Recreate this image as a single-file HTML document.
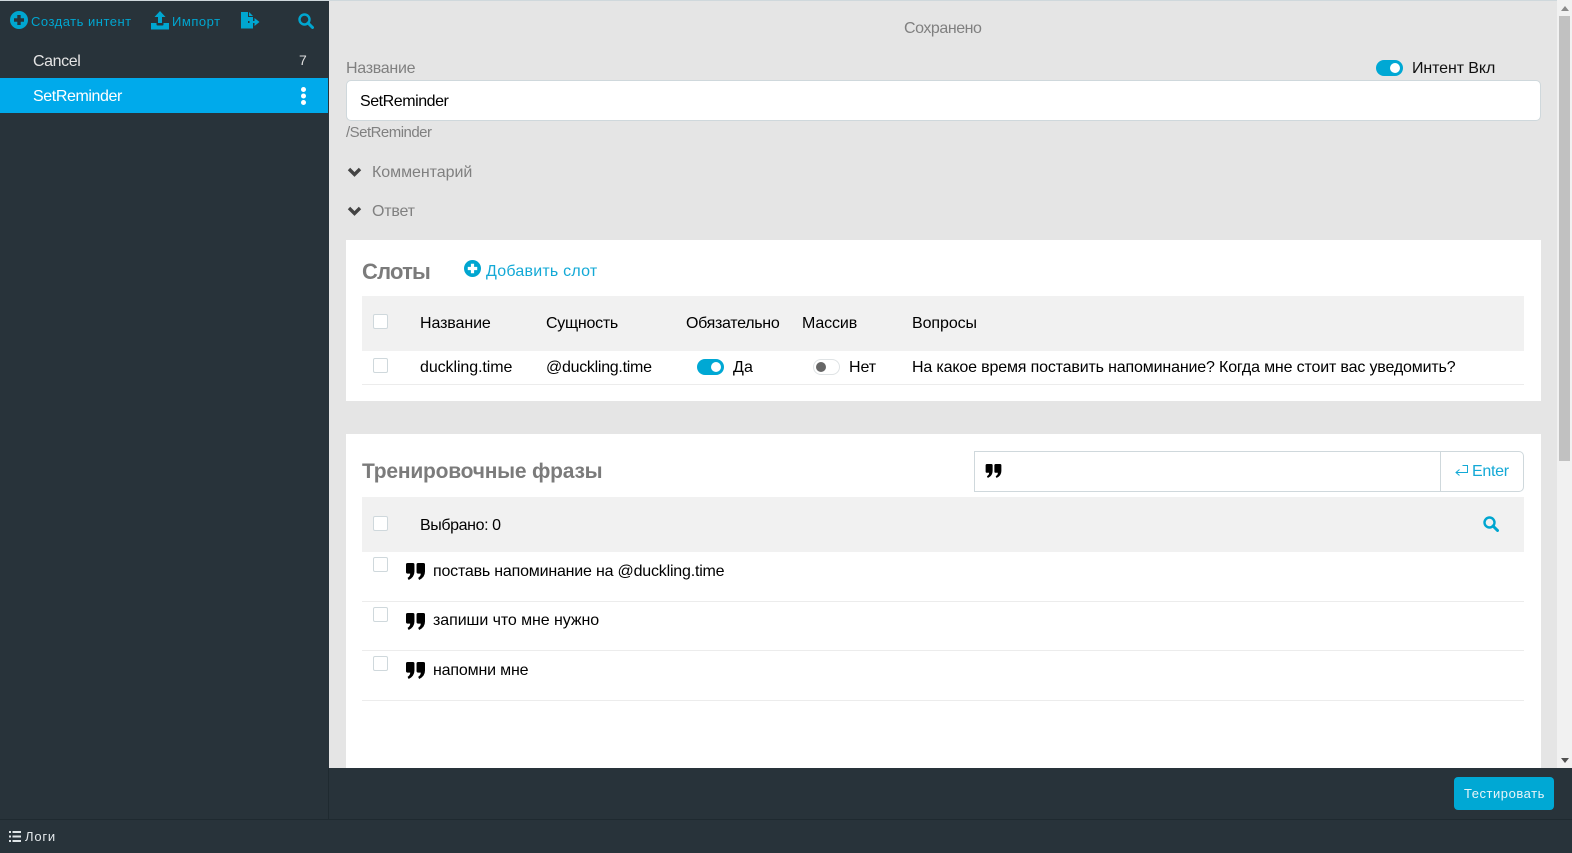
<!DOCTYPE html>
<html lang="ru"><head><meta charset="utf-8"><title>Intent</title>
<style>
html,body{margin:0;padding:0;width:1572px;height:853px;overflow:hidden;background:#28333a;font-family:"Liberation Sans",sans-serif;font-size:16px;color:#000}
.a{position:absolute;box-sizing:border-box}
.t{position:absolute;white-space:nowrap;line-height:20px;height:20px}
.b{color:#00a6d0}
.g{color:#808080}
.cb{position:absolute;width:15px;height:15px;background:#fff;border:1px solid #cfd8dc;border-radius:2px;box-sizing:border-box}
.tg{position:absolute;width:27px;height:16px;border-radius:8px;background:#00a8d4}
.tg:after{content:"";position:absolute;right:3px;top:3px;width:10px;height:10px;border-radius:50%;background:#fff}
.tg.off{background:#fff;border:1px solid #dfe3e5;box-sizing:border-box}
.tg.off:after{left:2px;right:auto;top:2px;background:#666}
.ln{position:absolute;height:1px;background:#ececec;left:362px;width:1162px}
svg{position:absolute;display:block}
</style></head><body>
<svg width="0" height="0" style="position:absolute"><defs>
<symbol id="q" viewBox="0 0 18 16"><path fill="currentColor" d="M1.500 0H6.500Q8 0 8 1.500V8Q8 13.500 2.500 16L1.500 14Q4 12.500 4 10H1.500Q0 10 0 8.500V1.500Q0 0 1.500 0ZM11.500 0H16.500Q18 0 18 1.500V8Q18 13.500 12.500 16L11.500 14Q14 12.500 14 10H11.500Q10 10 10 8.500V1.500Q10 0 11.500 0Z"/></symbol>
<symbol id="s" viewBox="0 0 16 16"><circle cx="6.500" cy="6.500" r="5" fill="none" stroke="currentColor" stroke-width="2.400"/><path d="M10 10l4.500 4.500" stroke="currentColor" stroke-width="3" stroke-linecap="round"/></symbol>
<symbol id="p" viewBox="0 0 18 18"><circle cx="9" cy="9" r="9" fill="currentColor"/><path d="M9 4v10M4 9h10" style="stroke:var(--pc,#fff)" stroke-width="3.400"/></symbol>
</defs></svg>

<!-- main -->
<div class="a" style="left:329px;top:0;width:1228px;height:768px;background:#e5e5e5"></div>
<div class="a" style="left:0;top:0;width:1572px;height:1px;background:#cfd8dc"></div>
<div class="a" style="left:1557px;top:0;width:15px;height:768px;background:#f1f1f1"></div>
<div class="a" style="left:1559px;top:16px;width:11px;height:445px;background:#c1c1c1"></div>
<div class="a" style="left:1561px;top:6px;border:4px solid transparent;border-top:0;border-bottom:5px solid #8a8a8a"></div>
<div class="a" style="left:1561px;top:758px;border:4px solid transparent;border-bottom:0;border-top:5px solid #505050"></div>

<!-- sidebar -->
<div class="a" style="left:0;top:78px;width:328px;height:35px;background:#00aaeb"></div>
<svg class="b" style="left:10px;top:11px;--pc:#28333a" width="18" height="18"><use href="#p"/></svg>
<span class="t b" style="left:31px;top:12px;font-size:13px;letter-spacing:.5px">Создать интент</span>
<svg class="b" style="left:151px;top:11px;color:#00a6d0" width="18" height="19" viewBox="0 0 18 19"><path fill="currentColor" d="M9 0l5.500 6H11v6H7V6H3.500zM0 12h5.500v1.500q0 1 1 1h5q1 0 1-1V12H18v6.500H0z"/></svg>
<span class="t b" style="left:172px;top:12px;font-size:13px;letter-spacing:.52px">Импорт</span>
<svg style="left:241px;top:12px;color:#00a6d0" width="19" height="17" viewBox="0 0 19 17"><path fill="currentColor" d="M0 0h7v5h5v4H7v2h5v5.500H0zM8 0l4 4H8zM13.500 6l5 4-5 4v-3H8.500V9h5z"/></svg>
<svg style="left:298px;top:13px;color:#00a6d0" width="16" height="16"><use href="#s"/></svg>
<span class="t" style="left:33px;top:52px;color:#e4e4e4;letter-spacing:-.4px">Cancel</span>
<span class="t" style="left:299px;top:50px;color:#ddd;font-size:14px">7</span>
<span class="t" style="left:33px;top:87px;color:#fff;letter-spacing:-.4px">SetReminder</span>
<div class="a" style="left:301px;top:87px;width:5px;height:5px;border-radius:50%;background:#fff;box-shadow:0 6.500px 0 #fff,0 13px 0 #fff"></div>

<!-- top form -->
<span class="t g" style="left:904px;top:19px;letter-spacing:-.45px">Сохранено</span>
<span class="t g" style="left:346px;top:59px;letter-spacing:-.28px">Название</span>
<div class="tg" style="left:1376px;top:60px"></div>
<span class="t" style="left:1412px;top:59px;color:#111;letter-spacing:-.1px">Интент Вкл</span>
<div class="a" style="left:346px;top:80px;width:1195px;height:41px;background:#fff;border:1px solid #cfd8dc;border-radius:5px"></div>
<span class="t" style="left:360px;top:92px;letter-spacing:-.45px">SetReminder</span>
<span class="t g" style="left:346px;top:123px;font-size:15px;letter-spacing:-.52px">/SetReminder</span>
<svg style="left:347px;top:167px" width="15" height="10" viewBox="0 0 15 10"><path d="M2 2l5.500 5.500L13 2" fill="none" stroke="#444" stroke-width="3.400"/></svg>
<span class="t g" style="left:372px;top:163px;letter-spacing:-.05px">Комментарий</span>
<svg style="left:347px;top:206px" width="15" height="10" viewBox="0 0 15 10"><path d="M2 2l5.500 5.500L13 2" fill="none" stroke="#444" stroke-width="3.400"/></svg>
<span class="t g" style="left:372px;top:202px;letter-spacing:-.2px">Ответ</span>

<!-- slots card -->
<div class="a" style="left:346px;top:240px;width:1195px;height:161px;background:#fff"></div>
<span class="t g" style="left:362px;top:262px;font-size:22px;line-height:20px;font-weight:bold;color:#7b7b7b;letter-spacing:-.8px">Слоты</span>
<svg class="b" style="left:464px;top:260px" width="17" height="17"><use href="#p"/></svg>
<span class="t b" style="left:486px;top:262px;letter-spacing:.22px;color:#13a9d6">Добавить слот</span>
<div class="a" style="left:362px;top:296px;width:1162px;height:55px;background:#f1f1f1"></div>
<div class="cb" style="left:373px;top:314px"></div>
<span class="t" style="left:420px;top:314px;letter-spacing:-.1px">Название</span>
<span class="t" style="left:546px;top:314px;letter-spacing:-.27px">Сущность</span>
<span class="t" style="left:686px;top:314px;letter-spacing:-.3px">Обязательно</span>
<span class="t" style="left:802px;top:314px;letter-spacing:-.13px">Массив</span>
<span class="t" style="left:912px;top:314px;letter-spacing:-.08px">Вопросы</span>
<div class="cb" style="left:373px;top:358px"></div>
<span class="t" style="left:420px;top:358px;letter-spacing:-.08px">duckling.time</span>
<span class="t" style="left:546px;top:358px;letter-spacing:-.28px">@duckling.time</span>
<div class="tg" style="left:697px;top:359px"></div>
<span class="t" style="left:733px;top:358px;letter-spacing:.2px">Да</span>
<div class="tg off" style="left:813px;top:359px"></div>
<span class="t" style="left:849px;top:358px;letter-spacing:-.1px">Нет</span>
<span class="t" style="left:912px;top:358px;letter-spacing:-.16px">На какое время поставить напоминание? Когда мне стоит вас уведомить?</span>
<div class="ln" style="top:384px"></div>

<!-- phrases card -->
<div class="a" style="left:346px;top:434px;width:1195px;height:334px;background:#fff"></div>
<span class="t" style="left:362px;top:462px;font-size:21px;font-weight:bold;color:#7b7b7b;letter-spacing:-.22px">Тренировочные фразы</span>
<div class="a" style="left:974px;top:451px;width:550px;height:41px;background:#fff;border:1px solid #cfd8dc;border-radius:0 5px 5px 0"></div>
<div class="a" style="left:1440px;top:451px;width:1px;height:41px;background:#cfd8dc"></div>
<svg style="left:985px;top:464px;color:#000" width="17" height="14"><use href="#q"/></svg>
<svg style="left:1455px;top:465px" width="13" height="12" viewBox="0 0 13 12"><path d="M7.500 .5h5v7H1.500M4.500 4.500l-3.500 3 3.500 3" fill="none" stroke="#13a9d6" stroke-width="1"/></svg>
<span class="t" style="left:1472px;top:462px;color:#13a9d6;letter-spacing:-.3px">Enter</span>
<div class="a" style="left:362px;top:497px;width:1162px;height:55px;background:#f1f1f1"></div>
<div class="cb" style="left:373px;top:516px"></div>
<span class="t" style="left:420px;top:516px;letter-spacing:-.4px">Выбрано: 0</span>
<svg style="left:1483px;top:516px;color:#00a6d0" width="16" height="16"><use href="#s"/></svg>

<div class="cb" style="left:373px;top:557px"></div>
<svg style="left:406px;top:563px" width="19" height="17"><use href="#q"/></svg>
<span class="t" style="left:433px;top:562px;letter-spacing:-.2px">поставь напоминание на @duckling.time</span>
<div class="ln" style="top:601px"></div>
<div class="cb" style="left:373px;top:607px"></div>
<svg style="left:406px;top:613px" width="19" height="17"><use href="#q"/></svg>
<span class="t" style="left:433px;top:611px;letter-spacing:-.07px">запиши что мне нужно</span>
<div class="ln" style="top:650px"></div>
<div class="cb" style="left:373px;top:656px"></div>
<svg style="left:406px;top:662px" width="19" height="17"><use href="#q"/></svg>
<span class="t" style="left:433px;top:661px;letter-spacing:-.17px">напомни мне</span>
<div class="ln" style="top:700px"></div>

<!-- footer -->
<div class="a" style="left:328px;top:768px;width:1px;height:51px;background:#1f2a30"></div>
<div class="a" style="left:0;top:819px;width:1572px;height:1px;background:#1f2a30"></div>
<div class="a" style="left:1454px;top:777px;width:100px;height:33px;background:#00a8d4;border-radius:4px"></div>
<span class="t" style="left:1464px;top:784px;color:#e8f4f8;font-size:13px;letter-spacing:.53px">Тестировать</span>
<svg style="left:9px;top:831px" width="12" height="11" viewBox="0 0 12 11"><path d="M0 1h2M3.500 1H12M0 5.500h2M3.500 5.500H12M0 10h2M3.500 10H12" stroke="#dfe5e8" stroke-width="2"/></svg>
<span class="t" style="left:25px;top:827px;color:#e4e9ec;font-size:13px;letter-spacing:.8px">Логи</span>
</body></html>
